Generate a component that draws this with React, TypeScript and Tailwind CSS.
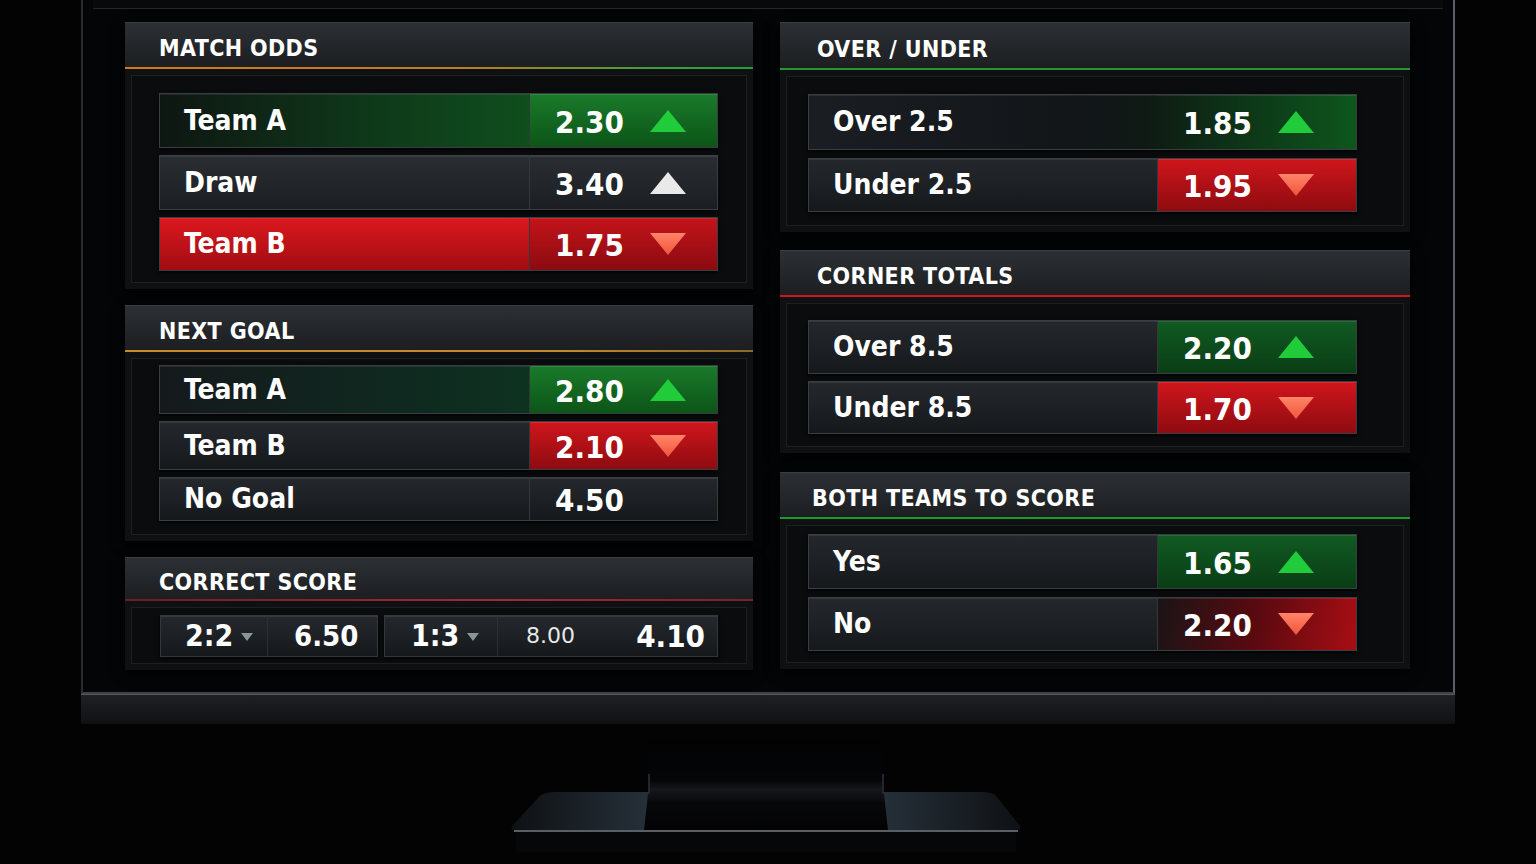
type Trend = "up" | "flat" | "down" | "none";

const FONT = "font-['DejaVu_Sans_Condensed','DejaVu_Sans',sans-serif]";

const Arrow = ({ trend }: { trend: Trend }) => {
  if (trend === "none") return null;
  if (trend === "down") {
    return (
      <svg width="38" height="24" viewBox="0 0 38 24" className="shrink-0">
        <defs>
          <linearGradient id="dn" x1="0" y1="0" x2="0" y2="1">
            <stop offset="0" stopColor="#ff8468" />
            <stop offset="1" stopColor="#f0553c" />
          </linearGradient>
        </defs>
        <polygon points="1,1 37,1 19,23" fill="url(#dn)" />
      </svg>
    );
  }
  return (
    <svg width="38" height="24" viewBox="0 0 38 24" className="shrink-0">
      <polygon points="19,1 37,23 1,23" fill={trend === "up" ? "#20cc3a" : "#e9e9e9"} />
    </svg>
  );
};

type RowProps = {
  label: string;
  odds: string;
  trend: Trend;
  h: string;
  labelW: string;
  labelBg: string;
  oddsBg: string;
  rowBg?: string;
  divider?: boolean;
};

const Row = ({ label, odds, trend, h, labelW, labelBg, oddsBg, rowBg = "", divider = true }: RowProps) => {
  return (
    <div className={`flex ${h} ${rowBg} border border-[#3a3e43] shadow-[0_2px_4px_rgba(0,0,0,0.8)]`}>
      <div
        className={`${labelW} flex items-center pl-[24px] ${labelBg} ${divider ? "border-r border-[#34383c]" : ""} shadow-[inset_0_1px_0_rgba(255,255,255,0.08)]`}
      >
        <span className="text-[28px] font-bold text-white leading-none">{label}</span>
      </div>
      <div className={`flex-1 flex items-center pl-[25px] gap-[22px] ${oddsBg} shadow-[inset_0_1px_0_rgba(255,255,255,0.1)]`}>
        <span className="w-[72px] text-[31px] font-bold text-white leading-none pt-[3px]">{odds}</span>
        <Arrow trend={trend} />
      </div>
    </div>
  );
};

const DARK = "bg-[linear-gradient(180deg,#24282c_0%,#16191c_100%)]";
const DARK_L = "bg-[linear-gradient(180deg,#2a2e33_0%,#1b1e22_100%)]";
const GREEN = "bg-[linear-gradient(180deg,#1a7a2a_0%,#0c5518_100%)]";
const GREEN_DIM = "bg-[linear-gradient(180deg,#115a22_0%,#0a3d16_100%)]";
const RED = "bg-[linear-gradient(180deg,#cf161c_0%,#8e0b10_100%)]";

type PanelProps = {
  title: string;
  line: string;
  headH: string;
  titlePl: string;
  inner: string;
  children: React.ReactNode;
};

const Panel = ({ title, line, headH, titlePl, inner, children }: PanelProps) => {
  return (
    <section className="flex flex-col shadow-[0_4px_12px_rgba(0,0,0,0.9)]">
      <header
        className={`${headH} flex items-center ${titlePl} pt-[7px] bg-[linear-gradient(180deg,#2c3034_0%,#1c1e21_100%)] border-t border-[#3a3d41]`}
      >
        <h2 className="text-[23px] font-bold text-white tracking-[0.4px] leading-none">{title}</h2>
      </header>
      <div className={`h-[2px] ${line}`} />
      <div className="bg-[#0e1012] p-[6px]">
        <div className={`border border-[#1c1f23] bg-[#0a0c0e] ${inner}`}>{children}</div>
      </div>
    </section>
  );
};

const ScoreCell = ({ w, children, cls = "" }: { w: string; children: React.ReactNode; cls?: string }) => (
  <div className={`${w} h-full flex items-center ${cls} bg-[linear-gradient(180deg,#25292d_0%,#15181b_100%)] shadow-[inset_0_1px_0_rgba(255,255,255,0.08)]`}>
    {children}
  </div>
);

const Caret = () => (
  <svg width="12" height="8" viewBox="0 0 12 8" className="ml-[8px] mt-[2px]">
    <polygon points="0,0 12,0 6,8" fill="#8a949b" />
  </svg>
);

const Stand = () => (
  <svg width="1536" height="140" viewBox="0 724 1536 140" className="block">
    <defs>
      <linearGradient id="neck" x1="0" y1="0" x2="0" y2="1">
        <stop offset="0" stopColor="#020203" />
        <stop offset="0.45" stopColor="#050607" />
        <stop offset="0.55" stopColor="#15181c" />
        <stop offset="0.7" stopColor="#07080a" />
        <stop offset="1" stopColor="#030304" />
      </linearGradient>
      <linearGradient id="base" x1="0" y1="0" x2="1" y2="0">
        <stop offset="0" stopColor="#0e1114" />
        <stop offset="0.17" stopColor="#1d242b" />
        <stop offset="0.27" stopColor="#263039" />
        <stop offset="0.5" stopColor="#11151a" />
        <stop offset="0.73" stopColor="#263039" />
        <stop offset="0.83" stopColor="#1d242b" />
        <stop offset="1" stopColor="#0e1114" />
      </linearGradient>
    </defs>
    <path d="M540 796 Q545 792 556 792 L980 792 Q992 792 996 796 L1020 826 Q1021 831 1014 831 L518 831 Q510 831 512 826 Z" fill="url(#base)" />
    <rect x="514" y="830" width="504" height="2" fill="#5a5f64" />
    <rect x="516" y="832" width="500" height="20" rx="2" fill="#060708" />
    <path d="M648 740 L884 740 L884 794 L888 830 L644 830 L648 794 Z" fill="url(#neck)" />
    <rect x="648" y="774" width="2" height="20" fill="#23272b" />
    <rect x="882" y="774" width="2" height="20" fill="#23272b" />
  </svg>
);

export default function App() {
  return (
    <div className={`w-[1536px] h-[864px] overflow-hidden bg-[#030304] ${FONT} flex flex-col items-center`}>
      {/* screen */}
      <div className="w-[1374px] h-[694px] shrink-0 flex flex-col bg-[#040506] border-l-2 border-r-2 border-b-2 border-l-[#2a2c2f] border-r-[#5c6066] border-b-[#3e4145]">
        <div className="h-[9px] mx-[10px] border-b border-[#24272a] bg-[#08090b]" />
        <div className="flex pt-[13px] pl-[42px] gap-[27px]">
          {/* left column */}
          <div className="w-[628px] flex flex-col gap-[16px]">
            <Panel
              title="MATCH ODDS"
              line="bg-[linear-gradient(90deg,#d07a1c_0%,#b8801c_55%,#3aa040_85%,#1fa03a_100%)]"
              headH="h-[45px]"
              titlePl="pl-[34px]"
              inner="pt-[17px] pb-[11px] pl-[27px] pr-[28px] flex flex-col gap-[7px]"
            >
              <Row
                label="Team A"
                odds="2.30"
                trend="up"
                h="h-[55px]"
                labelW="w-[370px]"
                labelBg="bg-[linear-gradient(90deg,#0e1612_0%,#0f3a1a_60%,#0f4e1d_100%)]"
                oddsBg={GREEN}
              />
              <Row label="Draw" odds="3.40" trend="flat" h="h-[55px]" labelW="w-[370px]" labelBg={DARK_L} oddsBg={DARK_L} />
              <Row
                label="Team B"
                odds="1.75"
                trend="down"
                h="h-[54px]"
                labelW="w-[370px]"
                labelBg="bg-[linear-gradient(180deg,#dc181e_0%,#a00d12_100%)]"
                oddsBg="bg-[linear-gradient(180deg,#c4141a_0%,#8a0b10_100%)]"
              />
            </Panel>

            <Panel
              title="NEXT GOAL"
              line="bg-[linear-gradient(90deg,#c88a2a_0%,#c08a30_70%,#8a6a2a_100%)]"
              headH="h-[45px]"
              titlePl="pl-[34px]"
              inner="pt-[6px] pb-[13px] pl-[27px] pr-[28px] flex flex-col gap-[7px]"
            >
              <Row
                label="Team A"
                odds="2.80"
                trend="up"
                h="h-[49px]"
                labelW="w-[370px]"
                labelBg="bg-[linear-gradient(90deg,#15191c_0%,#0f2a20_70%,#0e3220_100%)]"
                oddsBg={GREEN}
              />
              <Row label="Team B" odds="2.10" trend="down" h="h-[49px]" labelW="w-[370px]" labelBg={DARK} oddsBg={RED} />
              <Row label="No Goal" odds="4.50" trend="none" h="h-[44px]" labelW="w-[370px]" labelBg={DARK} oddsBg={DARK} />
            </Panel>

            <Panel
              title="CORRECT SCORE"
              line="bg-[linear-gradient(90deg,#6a1e2a_0%,#a02a3a_60%,#7a2030_100%)]"
              headH="h-[42px]"
              titlePl="pl-[34px]"
              inner="pt-[7px] pb-[6px] pl-[28px] pr-[28px]"
            >
              <div className="flex h-[42px] gap-[6px]">
                <div className="flex border border-[#33373b] shadow-[0_2px_4px_rgba(0,0,0,0.8)]">
                  <ScoreCell w="w-[107px]" cls="pl-[24px] border-r border-[#2c3034]">
                    <span className="text-[30px] font-bold text-white leading-none">2:2</span>
                    <Caret />
                  </ScoreCell>
                  <ScoreCell w="w-[109px]" cls="pl-[26px]">
                    <span className="text-[29px] font-bold text-white leading-none">6.50</span>
                  </ScoreCell>
                </div>
                <div className="flex flex-1 border border-[#33373b] shadow-[0_2px_4px_rgba(0,0,0,0.8)]">
                  <ScoreCell w="w-[113px]" cls="pl-[26px] border-r border-[#2c3034]">
                    <span className="text-[30px] font-bold text-white leading-none">1:3</span>
                    <Caret />
                  </ScoreCell>
                  <ScoreCell w="w-[102px]" cls="pl-[28px]">
                    <span className="text-[22px] text-[#e8e8e8] font-['DejaVu_Sans',sans-serif] leading-none">8.00</span>
                  </ScoreCell>
                  <ScoreCell w="flex-1" cls="justify-end pr-[12px]">
                    <span className="text-[31px] font-bold text-white leading-none">4.10</span>
                  </ScoreCell>
                </div>
              </div>
            </Panel>
          </div>

          {/* right column */}
          <div className="w-[630px] flex flex-col">
            <Panel
              title="OVER / UNDER"
              line="bg-[#1f9a30]"
              headH="h-[46px]"
              titlePl="pl-[37px]"
              inner="pt-[17px] pb-[13px] pl-[21px] pr-[46px] flex flex-col gap-[8px]"
            >
              <Row
                label="Over 2.5"
                odds="1.85"
                trend="up"
                h="h-[56px]"
                labelW="w-[349px]"
                rowBg="bg-[linear-gradient(90deg,#1a1e22_0%,#121518_50%,#0f1a14_62%,#0d3a18_82%,#0e561d_100%)]"
                labelBg="bg-transparent"
                oddsBg="bg-transparent"
                divider={false}
              />
              <Row label="Under 2.5" odds="1.95" trend="down" h="h-[54px]" labelW="w-[349px]" labelBg={DARK} oddsBg={RED} />
            </Panel>

            <div className="h-[18px]" />
            <Panel
              title="CORNER TOTALS"
              line="bg-[#d0161e]"
              headH="h-[45px]"
              titlePl="pl-[37px]"
              inner="pt-[16px] pb-[12px] pl-[21px] pr-[46px] flex flex-col gap-[7px]"
            >
              <Row label="Over 8.5" odds="2.20" trend="up" h="h-[54px]" labelW="w-[349px]" labelBg={DARK} oddsBg={GREEN_DIM} />
              <Row label="Under 8.5" odds="1.70" trend="down" h="h-[53px]" labelW="w-[349px]" labelBg={DARK} oddsBg={RED} />
            </Panel>

            <div className="h-[19px]" />
            <Panel
              title="BOTH TEAMS TO SCORE"
              line="bg-[#1a9a30]"
              headH="h-[45px]"
              titlePl="pl-[32px]"
              inner="pt-[8px] pb-[11px] pl-[21px] pr-[46px] flex flex-col gap-[8px]"
            >
              <Row label="Yes" odds="1.65" trend="up" h="h-[55px]" labelW="w-[349px]" labelBg={DARK} oddsBg={GREEN_DIM} />
              <Row
                label="No"
                odds="2.20"
                trend="down"
                h="h-[54px]"
                labelW="w-[349px]"
                labelBg={DARK}
                oddsBg="bg-[linear-gradient(100deg,#1a1416_0%,#5a0a10_50%,#a80e14_100%)]"
              />
            </Panel>
          </div>
        </div>
      </div>
      {/* bottom bezel */}
      <div className="w-[1374px] h-[30px] shrink-0 bg-[linear-gradient(180deg,#1e2023_0%,#16171a_60%,#101113_100%)] border-t border-[#55585c]" />
      <Stand />
    </div>
  );
}
